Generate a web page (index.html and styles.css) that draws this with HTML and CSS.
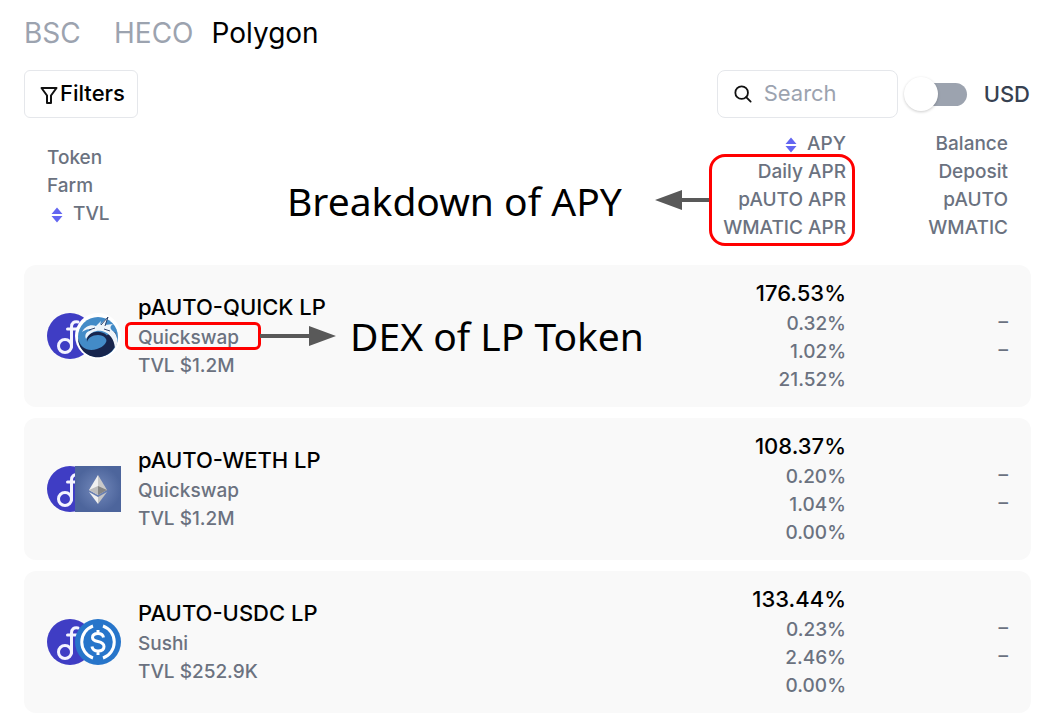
FILE: index.html
```html
<!DOCTYPE html>
<html lang="en">
  <head>
    <meta charset="utf-8" />
    <title>Farms</title>
    <meta name="viewport" content="width=device-width, initial-scale=1.0" />
    <link rel="stylesheet" href="styles.css">
  </head>

  <body>
    <!-- Shared shapes -->
    <svg class="defs" aria-hidden="true">
      <symbol id="sort" viewBox="0 0 12 16">
        <path d="M6 0.5 L11.5 7 H0.5 Z M6 15.5 L11.5 9 H0.5 Z" fill="#6366f1" />
      </symbol>
      <symbol id="auto-logo" viewBox="0 0 46 46">
        <circle cx="23" cy="23" r="23" fill="#3f3dc4" />
        <g fill="none" stroke="#f4f4ff" stroke-width="3" stroke-linecap="round">
          <circle cx="18" cy="33" r="6.5" />
          <path d="M24.500 34 V14 Q24.500 8 31 9" />
          <path d="M20.500 16 H30" />
        </g>
      </symbol>
    </svg>

    <nav class="tabs">
      <a href="#bsc" class="tab">BSC</a>
      <a href="#heco" class="tab">HECO</a>
      <a href="#polygon" class="tab active">Polygon</a>
    </nav>

    <div class="toolbar">
      <button class="filter-button">
        <svg width="18" height="19" viewBox="0 0 18 19" fill="none" stroke="#111" stroke-width="2" stroke-linejoin="round">
          <path d="M1.500 2 H16.500 L11 9.500 V17 H7 V9.500 Z" />
        </svg>
        Filters
      </button>
      <label class="search">
        <svg width="18" height="18" viewBox="0 0 20 20" fill="none" stroke="#111" stroke-width="2" stroke-linecap="round">
          <circle cx="8.500" cy="8.500" r="7" />
          <path d="M13.500 13.500 L18.500 18.500" />
        </svg>
        <input type="text" class="search-input" placeholder="Search" aria-label="Search" />
      </label>
      <label class="currency">
        <input type="checkbox" class="switch" />
        USD
      </label>
    </div>

    <table class="farms">
      <thead>
        <tr>
          <th class="col-token">
            <div>Token</div>
            <div>Farm</div>
            <div><svg class="sort sort-left" width="12" height="16"><use href="#sort" /></svg>TVL</div>
            <span class="note note-apy">Breakdown of APY</span>
          </th>
          <th class="col-apy">
            <div><svg class="sort" width="12" height="16"><use href="#sort" /></svg>APY</div>
            <div class="apr-lines">
              <div>Daily APR</div>
              <div>pAUTO APR</div>
              <div>WMATIC APR</div>
              <span class="outline outline-apr"></span>
              <svg class="arrow arrow-left" width="54" height="20" viewBox="0 0 54 20" fill="#595959">
                <path d="M0 10 L27 0 V8 H54 V12 H27 V20 Z" />
              </svg>
            </div>
          </th>
          <th class="col-balance">
            <div>Balance</div>
            <div>Deposit</div>
            <div>pAUTO</div>
            <div>WMATIC</div>
          </th>
        </tr>
      </thead>
      <tbody>
        <tr>
          <td>
            <div class="farm">
              <div class="logos">
                <svg width="46" height="46"><use href="#auto-logo" /></svg>
                <svg class="second" width="46" height="46" viewBox="0 0 46 46">
                  <circle cx="23" cy="23" r="23" fill="#fff" />
                  <circle cx="23" cy="24" r="20" fill="#438bc7" />
                  <path d="M3 25 C5 35 13 39 22 36 C29 34 33 29 32 22 L40 19 C45 29 39 41 26 44 C13 46 3 36 3 25 Z" fill="#17254d" />
                  <path d="M12 29 C11 22 17 18 25 19 C33 20 36 27 32 32 C33 26 29 22 23 22 C17 22 13 25 12 29 Z" fill="#17254d" />
                  <path d="M7 19 C10 13 16 11 21 13 L26 8 L25 12 L33 4 L30 12 L38 11 C34 14 35 16 40 20 C43 25 43 31 40 35 C39 26 35 20 27 18 C21 17 15 19 11 26 C9 21 12 18 17 17 C13 15 10 17 7 19 Z" fill="#eef4fa" />
                  <path d="M26 12 L33 4 L30 13 M14 17 L20 15 M29 16 L35 18" fill="none" stroke="#33456b" stroke-width="1" />
                </svg>
              </div>
              <div>
                <div class="name">pAUTO-QUICK LP</div>
                <div class="dex">
                  Quickswap
                  <span class="outline outline-dex"></span>
                  <svg class="arrow arrow-right" width="76" height="20" viewBox="0 0 76 20" fill="#595959">
                    <path d="M76 10 L49 0 V8 H0 V12 H49 V20 Z" />
                  </svg>
                  <span class="note note-dex">DEX of LP Token</span>
                </div>
                <div>TVL $1.2M</div>
              </div>
            </div>
          </td>
          <td>
            <div class="total">176.53%</div>
            <div>0.32%</div>
            <div>1.02%</div>
            <div>21.52%</div>
          </td>
          <td>
            <div>–</div>
            <div>–</div>
          </td>
        </tr>
        <tr>
          <td>
            <div class="farm">
              <div class="logos">
                <svg width="46" height="46"><use href="#auto-logo" /></svg>
                <svg class="second" width="46" height="46" viewBox="0 0 46 46">
                  <defs>
                    <radialGradient id="weth-bg">
                      <stop offset="0" stop-color="#7389bb" />
                      <stop offset="1" stop-color="#4d659c" />
                    </radialGradient>
                  </defs>
                  <rect width="46" height="46" fill="url(#weth-bg)" />
                  <path d="M23 9 L14 24 L23 29 Z" fill="#f0f0f0" />
                  <path d="M23 9 L32 24 L23 29 Z" fill="#c9c9c9" />
                  <path d="M14 24 L23 20 V29 Z" fill="#bdbdbd" />
                  <path d="M32 24 L23 20 V29 Z" fill="#858585" />
                  <path d="M14 26 L23 31 V38 Z" fill="#f0f0f0" />
                  <path d="M32 26 L23 31 V38 Z" fill="#c4c4c4" />
                </svg>
              </div>
              <div>
                <div class="name">pAUTO-WETH LP</div>
                <div>Quickswap</div>
                <div>TVL $1.2M</div>
              </div>
            </div>
          </td>
          <td>
            <div class="total">108.37%</div>
            <div>0.20%</div>
            <div>1.04%</div>
            <div>0.00%</div>
          </td>
          <td>
            <div>–</div>
            <div>–</div>
          </td>
        </tr>
        <tr>
          <td>
            <div class="farm">
              <div class="logos">
                <svg width="46" height="46"><use href="#auto-logo" /></svg>
                <svg class="second" width="46" height="46" viewBox="0 0 46 46">
                  <circle cx="23" cy="23" r="23" fill="#2775ca" />
                  <g fill="none" stroke="#fff" stroke-width="3">
                    <path d="M18 7 A17 17 0 0 0 18 39" />
                    <path d="M28 7 A17 17 0 0 1 28 39" />
                    <path d="M28.500 18.500 C28 15.500 26 14.500 23 14.500 C19.500 14.500 17.500 16 17.500 18.500 C17.500 24.500 29 20.500 29 27.500 C29 30.500 26.500 32 23 32 C19.500 32 17.500 30.500 17 27.500 M23 11 V15 M23 32 V36" />
                  </g>
                </svg>
              </div>
              <div>
                <div class="name">PAUTO-USDC LP</div>
                <div>Sushi</div>
                <div>TVL $252.9K</div>
              </div>
            </div>
          </td>
          <td>
            <div class="total">133.44%</div>
            <div>0.23%</div>
            <div>2.46%</div>
            <div>0.00%</div>
          </td>
          <td>
            <div>–</div>
            <div>–</div>
          </td>
        </tr>
      </tbody>
    </table>
  </body>
</html>
```
FILE: styles.css
```css
* {
  box-sizing: border-box;
}

body {
  font-family: Inter, "Liberation Sans", sans-serif;
  font-size: 19px;
  line-height: 28px;
  margin: 0;
  padding: 13px 19px 0 24px;
  background-color: #fff;
  color: #6b7280;
}

.defs {
  position: absolute;
  width: 0;
  height: 0;
}

/* Network tabs */
.tabs {
  display: flex;
  gap: 18px;
  margin-bottom: 17px;
  font-size: 28px;
  line-height: 40px;
}

.tab {
  min-width: 72px;
  color: #9ca3af;
  text-decoration: none;
}

.tab.active {
  color: #000;
}

/* Filters, search and currency switch */
.toolbar {
  display: flex;
  align-items: center;
  height: 48px;
}

.filter-button {
  display: flex;
  align-items: center;
  gap: 2px;
  height: 48px;
  margin-right: auto;
  padding: 0 12px 2px 15px;
  border: 1px solid #e5e7eb;
  border-radius: 6px;
  background-color: #fff;
  color: #000;
  font-family: inherit;
  font-size: 22px;
  font-weight: 500;
  cursor: pointer;
}

.filter-button svg {
  margin-top: 4px;
}

.search {
  display: flex;
  align-items: center;
  gap: 12px;
  width: 181px;
  height: 48px;
  padding: 0 16px;
  border: 1px solid #e5e7eb;
  border-radius: 8px;
}

.search svg {
  flex: none;
}

.search-input {
  width: 100%;
  min-width: 0;
  padding: 0 0 2px;
  border: none;
  outline: none;
  background: none;
  font-family: inherit;
  font-size: 22px;
}

.search-input::placeholder {
  color: #9ca3af;
  opacity: 1;
}

.currency {
  display: flex;
  align-items: center;
  gap: 17px;
  margin: 0 1px 0 13px;
  color: #374151;
  font-size: 22px;
  font-weight: 500;
}

.switch {
  position: relative;
  appearance: none;
  width: 56px;
  height: 23px;
  margin: 0;
  border-radius: 12px;
  background-color: #9ca3af;
  cursor: pointer;
}

.switch::before {
  content: "";
  position: absolute;
  top: -6px;
  left: -7px;
  width: 34px;
  height: 34px;
  border-radius: 50%;
  background-color: #fff;
  box-shadow: 0 1px 3px rgba(0, 0, 0, 0.2);
}

.switch:checked::before {
  left: 29px;
}

/* Farm list */
.farms {
  width: 100%;
  border-spacing: 0 11px;
}

.farms th,
.farms td {
  position: relative;
  padding: 12px 0 13px;
  font-weight: 500;
  text-align: right;
}

.farms th {
  padding: 1px 0 12px;
}

.farms th:first-child,
.farms td:first-child {
  padding-left: 23px;
  text-align: left;
}

.farms th:last-child,
.farms td:last-child {
  padding-right: 23px;
}

.farms td {
  background-color: #f9f9f9;
}

.farms td:first-child {
  border-radius: 12px 0 0 12px;
}

.farms td:last-child {
  border-radius: 0 12px 12px 0;
}

.col-apy {
  width: 20%;
}

.col-balance {
  width: 185px;
}

.sort {
  margin-right: 10px;
  vertical-align: -3px;
}

.sort-left {
  margin-left: 4px;
}

.farm {
  display: flex;
  align-items: center;
  gap: 17px;
}

.logos {
  display: flex;
}

.logos .second {
  margin-left: -18px;
}

.name,
.total {
  margin-bottom: 1px;
  color: #000;
  font-size: 22px;
  line-height: 32px;
}

/* Callouts over the list */
.apr-lines,
.dex {
  position: relative;
}

.note {
  position: absolute;
  color: #000;
  font-family: "Noto Sans", sans-serif;
  font-size: 39px;
  font-weight: 400;
  line-height: 48px;
  white-space: nowrap;
}

.note-apy {
  top: 48px;
  left: 263px;
}

.note-dex {
  top: -12px;
  left: 212px;
}

.outline {
  position: absolute;
  border: 3px solid #f00;
}

.outline-apr {
  top: -4px;
  right: -9px;
  width: 146px;
  height: 92px;
  border-radius: 16px;
}

.outline-dex {
  top: -2px;
  left: -13px;
  width: 136px;
  height: 28px;
  border-radius: 6px;
}

.arrow {
  position: absolute;
}

.arrow-left {
  top: 32px;
  right: 137px;
}

.arrow-right {
  top: 2px;
  left: 122px;
}
```
